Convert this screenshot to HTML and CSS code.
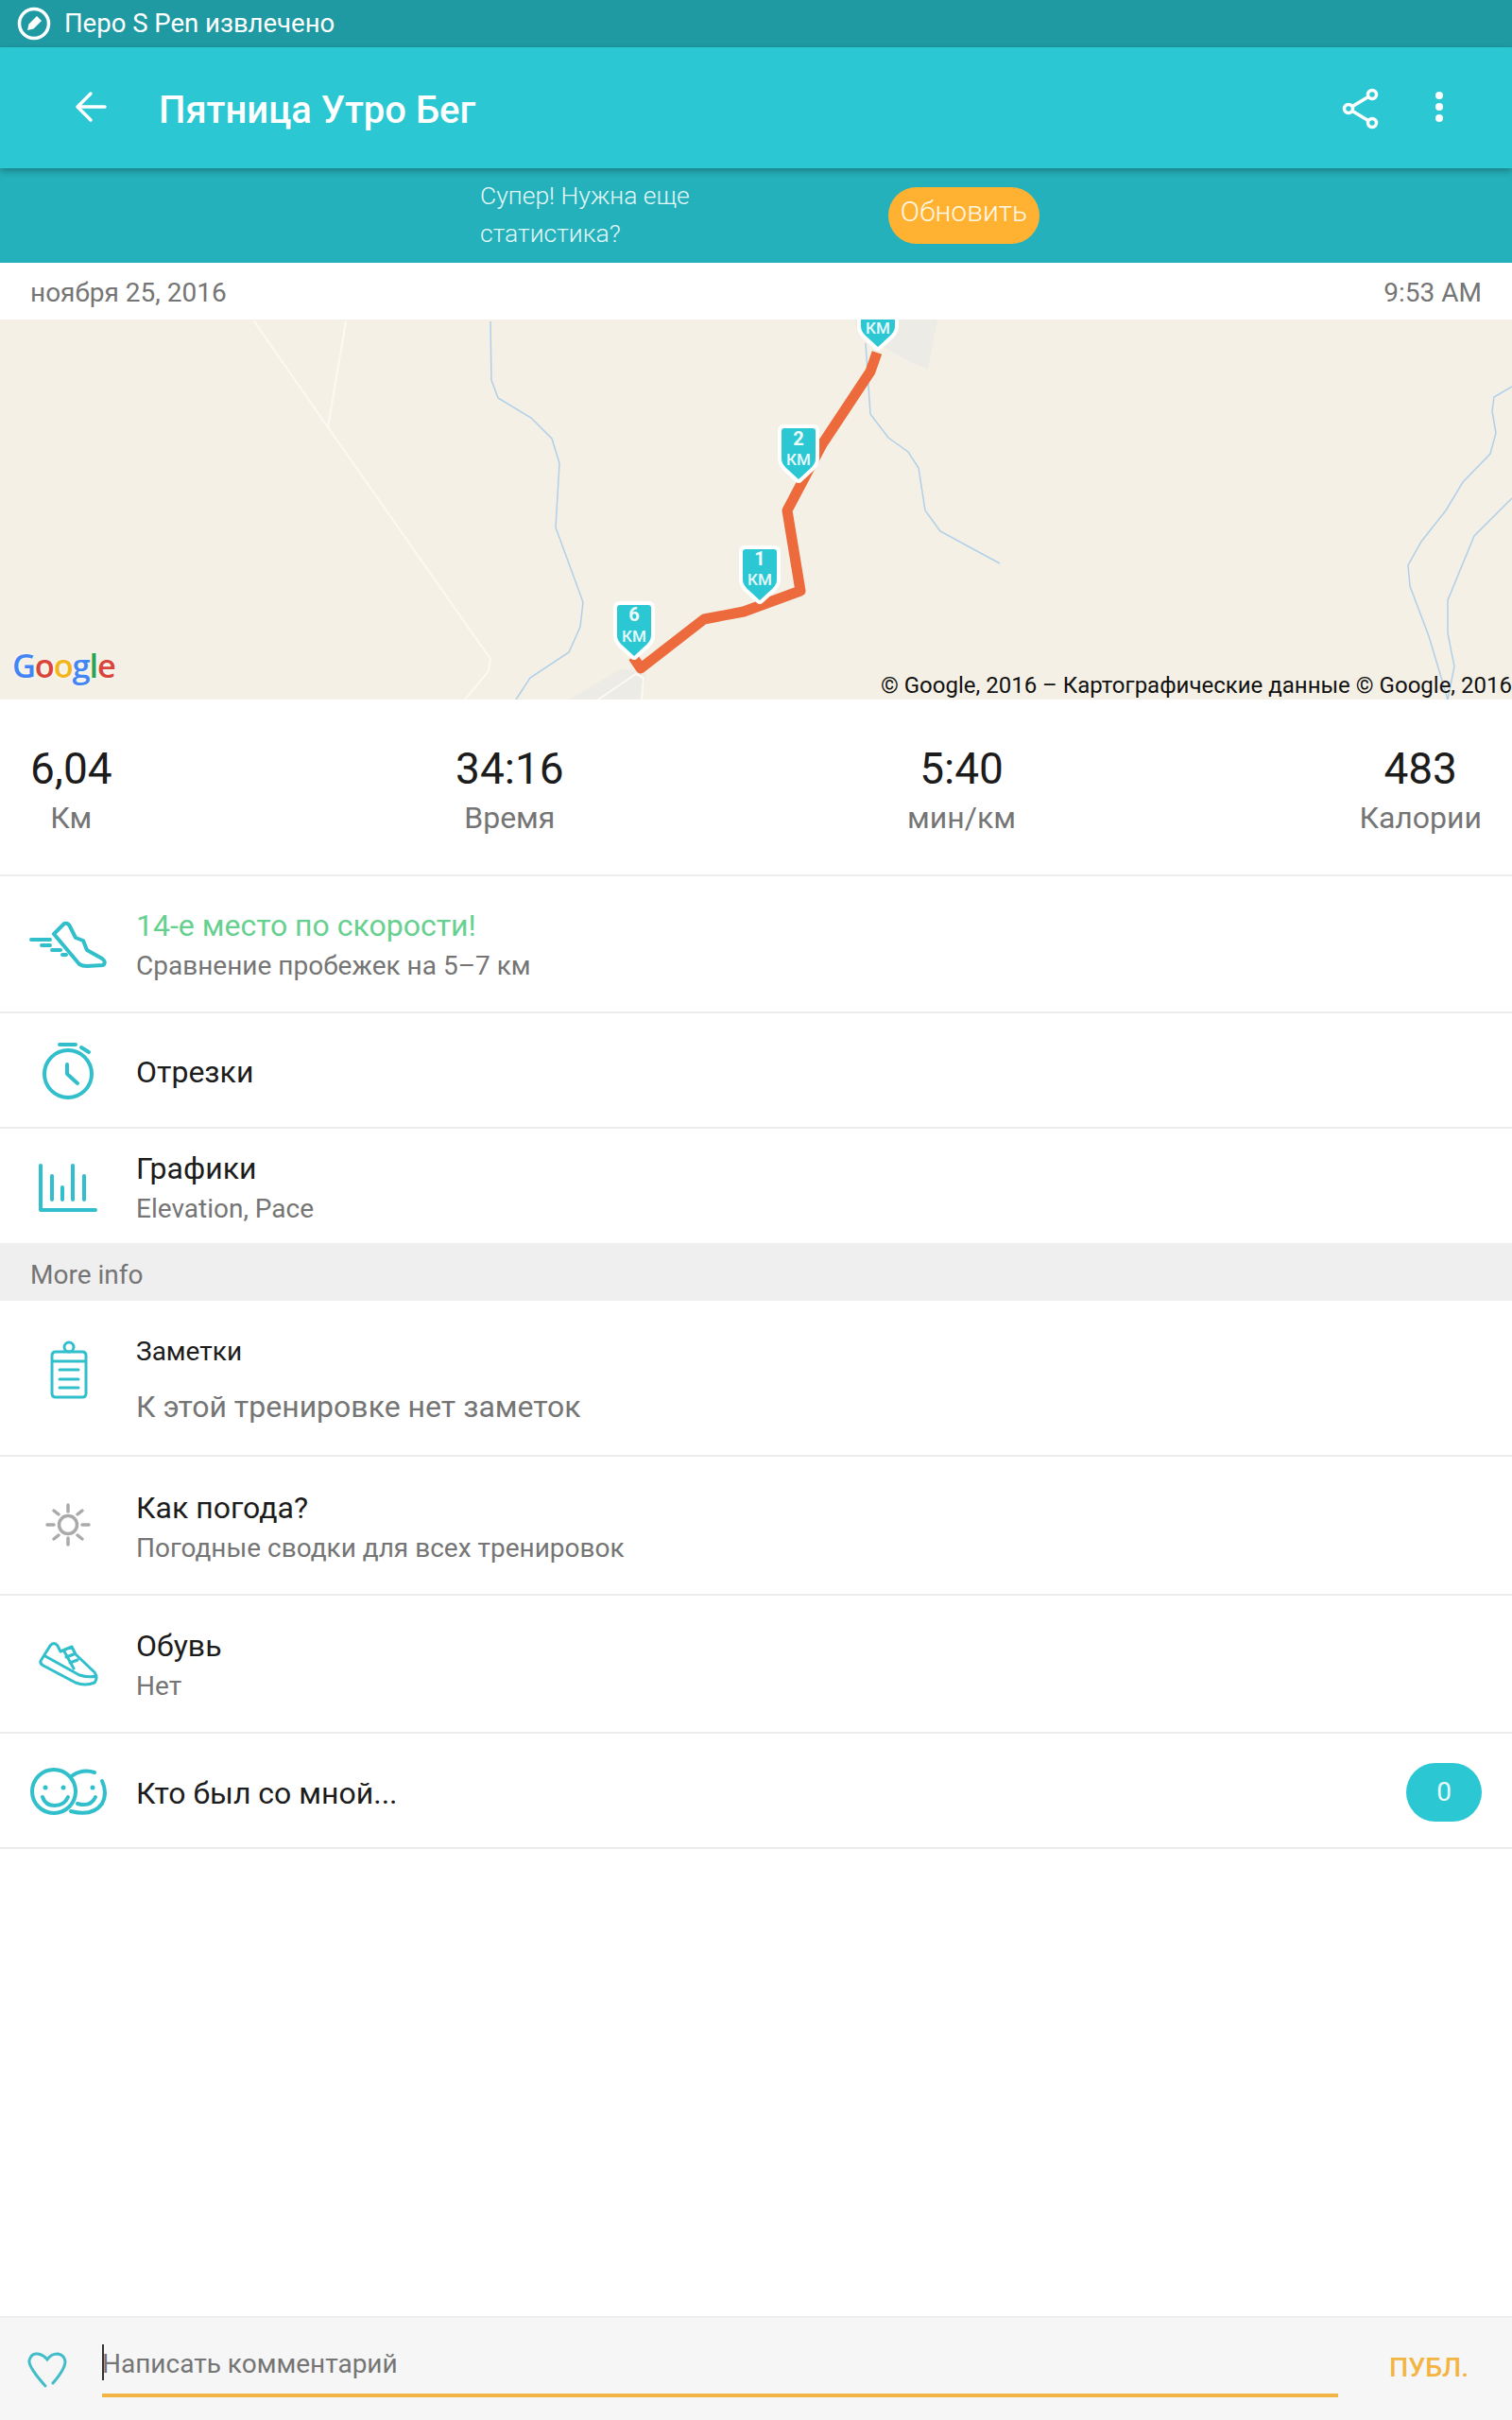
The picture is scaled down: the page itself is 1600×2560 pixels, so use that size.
FILE: index.html
```html
<!DOCTYPE html>
<html lang="ru">
<head>
<meta charset="utf-8">
<title>Пятница Утро Бег</title>
<link rel="stylesheet" href="styles.css">
</head>
<body>
<div class="screen">
  <div class="status">
    <svg class="status-icon" viewBox="0 0 36 36"><circle cx="18" cy="18" r="15.5" class="ic-white"/><path d="M11 25l1.5-6.5L21 10l5 5-8.500 8.500z" class="fill-white"/></svg>
    <span>Перо S Pen извлечено</span>
  </div>
  <header class="toolbar">
    <svg class="back" viewBox="0 0 36 36"><path d="M33 18H5M18 4L4 18l14 14" class="ic-white"/></svg>
    <h1 class="title">Пятница Утро Бег</h1>
    <svg class="share" viewBox="0 0 44 44"><path d="M8 22L33 7M8 22l25 15" class="ic-white"/><circle cx="33" cy="7" r="4.500" class="ic-white fill-teal"/><circle cx="8" cy="22" r="4.500" class="ic-white fill-teal"/><circle cx="33" cy="37" r="4.500" class="ic-white fill-teal"/></svg>
    <svg class="more" viewBox="0 0 10 34"><circle cx="5" cy="5" r="4" class="fill-white"/><circle cx="5" cy="17" r="4" class="fill-white"/><circle cx="5" cy="29" r="4" class="fill-white"/></svg>
  </header>
  <div class="promo">
    <p class="promo-text">Супер! Нужна еще<br>статистика?</p>
    <div class="promo-btn">Обновить</div>
  </div>
  <div class="date-row"><span>ноября 25, 2016</span><span>9:53 AM</span></div>

  <div class="map">
    <svg class="map-svg" viewBox="0 338 1600 402">
      <defs>
        <path id="pin" d="M-20 5Q-20 0-15 0H15Q20 0 20 5V34Q20 40 15 45L2 57Q0 59-2 57L-15 45Q-20 40-20 34Z"/>
      </defs>
      <path class="area" d="M905 338H992L982 390 968 385 930 365 905 345Z"/>
      <path class="area" d="M602 740L658 707 684 713 679 740Z"/>
      <path class="road" d="M269 340L347 452 519 697 517 710 492 740"/>
      <path class="road" d="M366 340L347 452"/>
      <path class="road" d="M633 740L673 713 681 717 679 740"/>
      <path class="river" d="M519 340L520 402 527 421 562 442 584 464 592 490 588 558 617 637 614 663 602 690 561 717 546 740"/>
      <path class="river" d="M916 363L921 438 940 463 961 478 972 495 979 540 995 562 1058 596"/>
      <path class="river" d="M1600 409L1581 420 1579 435 1583 458 1577 480 1548 510 1530 540 1504 573 1490 598 1492 620 1512 673 1532 740"/>
      <path class="river" d="M1600 527L1560 567 1532 635 1532 670 1539 705 1532 740"/>
      <path class="route" d="M928 373L921 393 870 470 833 540 847 625 787 647 745 655 678 707 670 695"/>
      <use href="#pin" class="pin" x="671" y="638"/>
      <text class="pin-num" x="671" y="657">6</text>
      <text class="pin-unit" x="671" y="679">КМ</text>
      <use href="#pin" class="pin" x="804" y="579"/>
      <text class="pin-num" x="804" y="598">1</text>
      <text class="pin-unit" x="804" y="619">КМ</text>
      <use href="#pin" class="pin" x="845" y="451"/>
      <text class="pin-num" x="845" y="471">2</text>
      <text class="pin-unit" x="845" y="492">КМ</text>
      <use href="#pin" class="pin" x="929" y="311"/>
      <text class="pin-unit" x="929" y="353">КМ</text>
    </svg>
    <div class="google"><span class="g-b">G</span><span class="g-r">o</span><span class="g-y">o</span><span class="g-b">g</span><span class="g-g">l</span><span class="g-r">e</span></div>
    <div class="attrib">© Google, 2016 – Картографические данные © Google, 2016</div>
  </div>

  <section class="stats">
    <div class="stat"><div class="stat-val">6,04</div><div class="stat-lab">Км</div></div>
    <div class="stat"><div class="stat-val">34:16</div><div class="stat-lab">Время</div></div>
    <div class="stat"><div class="stat-val">5:40</div><div class="stat-lab">мин/км</div></div>
    <div class="stat"><div class="stat-val">483</div><div class="stat-lab">Калории</div></div>
  </section>

  <div class="row h145">
    <svg class="ico" viewBox="0 959 144 80"><path class="ic" d="M33 994H53M44 1000H53M55 1005H64M66 1010H70"/><path class="ic" d="M57 988L68 977Q72 976 74 980L80 992 88 995 92 1005 108 1014Q113 1018 109 1021L92 1022Q87 1022 84 1020Z"/></svg>
    <div class="txt up"><div class="t-green">14-е место по скорости!</div><div class="t-sub">Сравнение пробежек на 5–7 км</div></div>
  </div>
  <div class="row h122">
    <svg class="ico" viewBox="0 1093 144 80"><circle class="ic" cx="72" cy="1137" r="25"/><path class="ic" d="M71 1127V1137L82 1147M63 1106H80M86 1109L94 1114"/></svg>
    <div class="txt single up"><div class="t-main">Отрезки</div></div>
  </div>
  <div class="row h121 last">
    <svg class="ico" viewBox="0 1214 144 80"><path class="ic" d="M43 1232V1279H101M55 1243V1268M66 1255V1268M77 1232V1268M89 1243V1268"/></svg>
    <div class="txt"><div class="t-main">Графики</div><div class="t-sub">Elevation, Pace</div></div>
  </div>
  <div class="section-head">More info</div>
  <div class="row h165 top">
    <svg class="ico" viewBox="0 1418 144 80"><circle class="ic thin" cx="73" cy="1425" r="5"/><path class="ic thin" d="M59 1430H87Q91 1430 91 1434V1474Q91 1478 87 1478H59Q55 1478 55 1474V1434Q55 1430 59 1430ZM55 1440H91M63 1449H83M63 1459H83M63 1468H83"/></svg>
    <div class="txt note"><div class="t-small">Заметки</div><div class="t-note">К этой тренировке нет заметок</div></div>
  </div>
  <div class="row h146">
    <svg class="ico" viewBox="0 1574 144 80"><circle class="ic-grey" cx="72" cy="1614" r="9.500"/><path class="ic-grey" d="M72 1593V1600M72 1628V1635M50 1614H57M87 1614H94M57 1599L62 1603M87 1599L82 1603M57 1629L62 1625M87 1629L82 1625"/></svg>
    <div class="txt"><div class="t-main">Как погода?</div><div class="t-sub">Погодные сводки для всех тренировок</div></div>
  </div>
  <div class="row h146">
    <svg class="ico" viewBox="0 1720 144 80"><path class="ic thin" d="M43 1757L53 1741Q57 1736 61 1741L64 1747 76 1742 80 1750 100 1769Q104 1775 100 1780 90 1784 80 1780L46 1762Q42 1760 43 1757ZM48 1752L84 1772Q94 1775 102 1773M68 1747L78 1765M70 1753L78 1750M74 1759L82 1756"/></svg>
    <div class="txt"><div class="t-main">Обувь</div><div class="t-sub">Нет</div></div>
  </div>
  <div class="row h122">
    <svg class="ico" viewBox="0 1854 144 80"><circle class="ic" cx="57" cy="1895" r="23"/><path class="ic" d="M77 1878Q88 1871 100 1875M108 1884Q114 1897 108 1908 98 1922 75 1916M45 1901Q48 1910 58 1910 68 1910 72 1901M82 1908Q96 1912 101 1901"/><circle class="dot" cx="48" cy="1891" r="2.500"/><circle class="dot" cx="67" cy="1891" r="2.500"/><circle class="dot" cx="98" cy="1891" r="2.500"/></svg>
    <div class="txt single grow"><div class="t-main">Кто был со мной...</div></div>
    <div class="badge">0</div>
  </div>

  <div class="spacer"></div>

  <footer class="composer">
    <svg class="heart" viewBox="0 0 42 38"><path d="M19 36Q1 16 2 9 4 1 11 2 17 3 21 8 25 2 32 2 39 3 40 10 40 18 27 33"/></svg>
    <div class="input"><span class="caret"></span><span>Написать комментарий</span></div>
    <div class="post">ПУБЛ.</div>
  </footer>
</div>
</body>
</html>
```
FILE: styles.css
```css
* { box-sizing: border-box; }
html, body { margin: 0; padding: 0; }
body { background: #fff; font-family: Roboto, "Noto Sans", sans-serif; color: #1c1c1c; }
.screen { width: 1600px; height: 2560px; display: flex; flex-direction: column; overflow: hidden; }

.status { height: 50px; background: #1f9aa3; color: #fff; display: flex; align-items: center; padding: 0 0 2px 18px; font-size: 27.500px; gap: 14px; }
.status-icon { width: 36px; height: 36px; margin-top: 2px; }
.ic-white { fill: none; stroke: #fff; stroke-width: 3.5; stroke-linecap: round; stroke-linejoin: round; }
.fill-white { fill: #fff; }
.fill-teal { fill: #2bc8d4; }

.toolbar { height: 128px; background: #2bc8d4; display: flex; align-items: center; position: relative; z-index: 1; box-shadow: 0 3px 7px rgba(0,0,0,.3); color: #fff; padding-left: 78px; }
.back { width: 36px; height: 36px; margin-top: -2px; }
.title { margin: 5px 0 0 54px; font-size: 40px; font-weight: 500; flex: 1; line-height: 1; }
.share { width: 44px; height: 44px; margin-right: 55px; margin-top: 1px; }
.more { width: 10px; height: 34px; margin-right: 72px; margin-top: -3px; }

.promo { height: 100px; background: #25b1bb; display: flex; align-items: center; padding-left: 508px; color: #e2f7f8; font-weight: 300; font-size: 26.500px; }
.promo-text { margin: -2px 0 0; width: 432px; line-height: 40px; }
.promo-btn { width: 160px; height: 60px; border-radius: 30px; background: #ffb232; color: #fff8e8; font-size: 30px; text-align: center; line-height: 52px; }

.date-row { height: 60px; display: flex; justify-content: space-between; align-items: center; padding: 2px 32px 0; font-size: 28px; color: #757575; }

.map { position: relative; height: 402px; background: #f4f0e5; }
.map-svg { display: block; width: 1600px; height: 402px; }
.area { fill: #ecebe6; }
.road { fill: none; stroke: #fbf9f1; stroke-width: 2; }
.river { fill: none; stroke: #b0cfe8; stroke-width: 1.500; }
.route { fill: none; stroke: #ec6a3c; stroke-width: 11; stroke-linejoin: round; }
.pin { fill: #2bc8d4; stroke: #fff; stroke-width: 4; }
.pin-num { fill: #f0fbfc; font-family: Roboto, sans-serif; font-size: 20px; font-weight: 700; text-anchor: middle; }
.pin-unit { fill: #e8f9fa; font-family: Roboto, sans-serif; font-size: 17px; font-weight: 500; text-anchor: middle; }
.google { position: absolute; left: 13px; top: 344px; font-family: "Open Sans", sans-serif; font-weight: 600; font-size: 34.500px; line-height: 44px; letter-spacing: -1.200px; text-shadow: 0 0 3px #fff; }
.g-b { color: #4285f4; }
.g-r { color: #d9453a; }
.g-y { color: #f1b61c; }
.g-g { color: #2fa24f; }
.attrib { position: absolute; right: 0; bottom: 0; color: #111; font-size: 24px; line-height: 30px; white-space: nowrap; }

.stats { height: 187px; display: flex; justify-content: space-between; align-items: flex-start; padding: 48px 32px 0; border-bottom: 2px solid #ececec; }
.stat { text-align: center; }
.stat-val { font-size: 46px; line-height: 50px; color: #1c1c1c; }
.stat-lab { font-size: 32px; line-height: 46px; color: #757575; margin-top: 4px; }

.row { display: flex; align-items: center; border-bottom: 2px solid #ececec; }
.row.last { border-bottom: 0; }
.h145 { height: 145px; }
.h122 { height: 122px; }
.h121 { height: 121px; }
.h146 { height: 146.500px; }
.h165 { height: 165px; }
.ico { width: 144px; height: 80px; flex-shrink: 0; }
.ic { fill: none; stroke: #30bfcb; stroke-width: 4; stroke-linecap: round; stroke-linejoin: round; }
.ic.thin { stroke-width: 3; }
.ic-grey { fill: none; stroke: #aaa; stroke-width: 3.500; stroke-linecap: round; }
.dot { fill: #30bfcb; }
.txt { display: flex; flex-direction: column; padding-top: 7px; }
.txt.up { padding-top: 5px; }
.txt.single { padding-top: 5px; }
.txt.single.up { padding-top: 3px; }
.txt.note { padding-top: 5px; }
.grow { flex: 1; }
.t-green { font-size: 32px; line-height: 42px; color: #66d08f; }
.t-main { font-size: 32px; line-height: 42px; color: #1c1c1c; }
.t-sub { font-size: 28px; line-height: 44px; color: #757575; }
.t-small { font-size: 28px; line-height: 44px; color: #1c1c1c; }
.t-note { font-size: 32px; line-height: 50px; color: #757575; margin-top: 11px; }
.section-head { height: 61px; background: #efefef; display: flex; align-items: center; padding: 5px 0 0 32px; font-size: 28px; color: #757575; }
.badge { width: 80px; height: 62px; border-radius: 31px; background: #2bc8d4; color: #e8fafb; font-size: 28px; text-align: center; line-height: 62px; margin: 4px 32px 0 0; }

.spacer { flex: 1; }
.composer { height: 110px; background: #f6f6f6; border-top: 2px solid #eee; display: flex; align-items: flex-start; position: relative; }
.heart { width: 42px; height: 38px; margin: 36px 0 0 29px; flex-shrink: 0; fill: none; stroke: #41bcc8; stroke-width: 3; stroke-linecap: round; }
.input { width: 1308px; height: 84px; margin-left: 37px; border-bottom: 4px solid #f2b544; display: flex; align-items: center; font-size: 28px; color: #757575; padding-top: 17px; position: relative; }
.caret { position: absolute; left: 0; top: 28px; width: 2px; height: 38px; background: #333; }
.post { margin-left: 54px; margin-top: 36px; color: #f2b544; font-size: 28.500px; font-weight: 500; }
```
